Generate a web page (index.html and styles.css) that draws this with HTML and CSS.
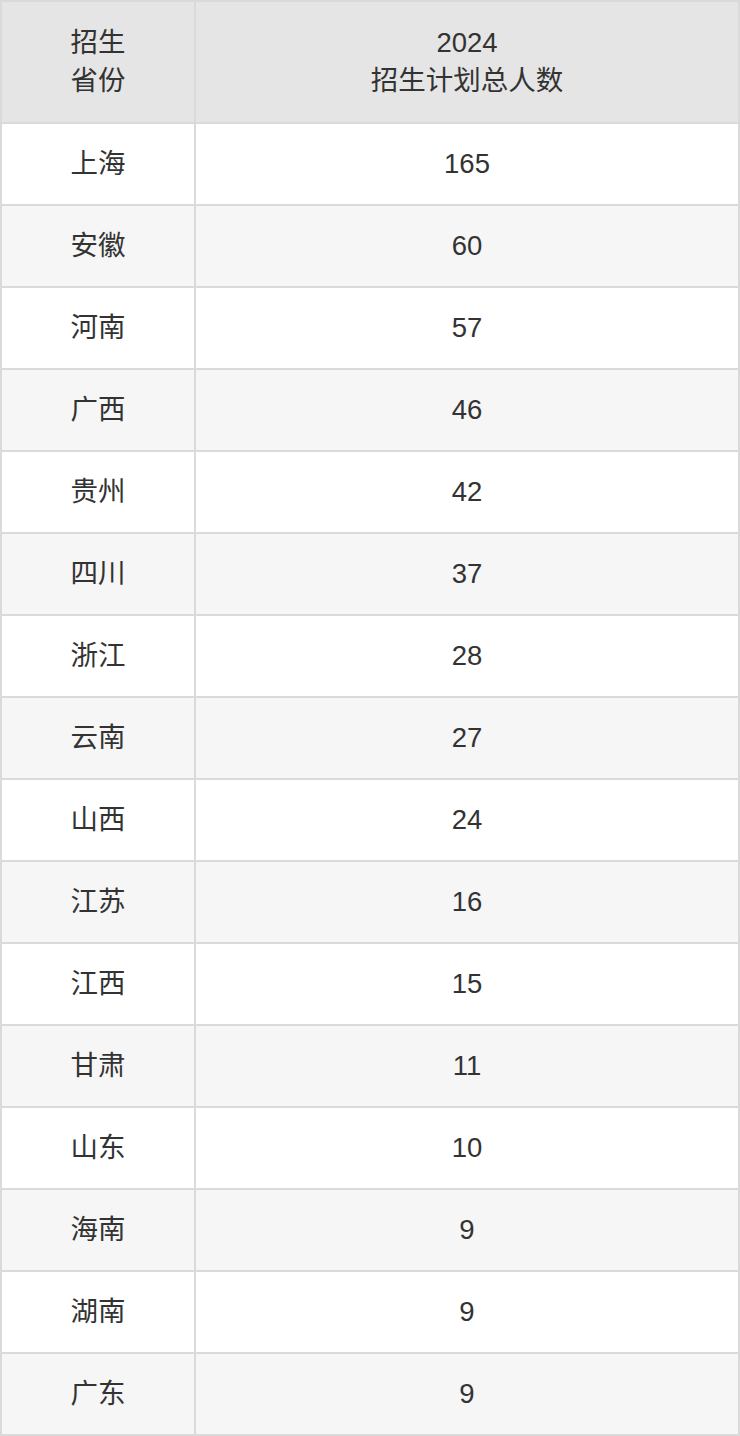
FILE: index.html
```html
<!DOCTYPE html>
<html lang="zh">
<head>
<meta charset="utf-8">
<title>招生计划</title>
<link rel="stylesheet" href="styles.css">
</head>
<body>
<table class="plan">
  <thead>
    <tr>
      <th class="col-prov">招生<br>省份</th>
      <th class="col-num">2024<br>招生计划总人数</th>
    </tr>
  </thead>
  <tbody>
    <tr><td>上海</td><td>165</td></tr>
    <tr><td>安徽</td><td>60</td></tr>
    <tr><td>河南</td><td>57</td></tr>
    <tr><td>广西</td><td>46</td></tr>
    <tr><td>贵州</td><td>42</td></tr>
    <tr><td>四川</td><td>37</td></tr>
    <tr><td>浙江</td><td>28</td></tr>
    <tr><td>云南</td><td>27</td></tr>
    <tr><td>山西</td><td>24</td></tr>
    <tr><td>江苏</td><td>16</td></tr>
    <tr><td>江西</td><td>15</td></tr>
    <tr><td>甘肃</td><td>11</td></tr>
    <tr><td>山东</td><td>10</td></tr>
    <tr><td>海南</td><td>9</td></tr>
    <tr><td>湖南</td><td>9</td></tr>
    <tr><td>广东</td><td>9</td></tr>
  </tbody>
</table>
</body>
</html>
```
FILE: styles.css
```css
html, body {
  margin: 0;
  padding: 0;
  background: #ffffff;
}

.plan {
  width: 740px;
  border-collapse: collapse;
  table-layout: fixed;
  font-family: "Liberation Sans", "Noto Sans CJK SC", sans-serif;
  font-size: 27.5px;
  color: #333333;
}

.plan th,
.plan td {
  border: 2px solid #dadada;
  text-align: center;
  vertical-align: middle;
  padding: 0;
}

.plan th {
  background: #e5e5e5;
  font-weight: normal;
  height: 120px;
  line-height: 38px;
}

.plan .col-prov {
  width: 192px;
}

.plan td {
  height: 80px;
  line-height: 30px;
}

.plan tbody tr:nth-child(even) td {
  background: #f6f6f6;
}
```
